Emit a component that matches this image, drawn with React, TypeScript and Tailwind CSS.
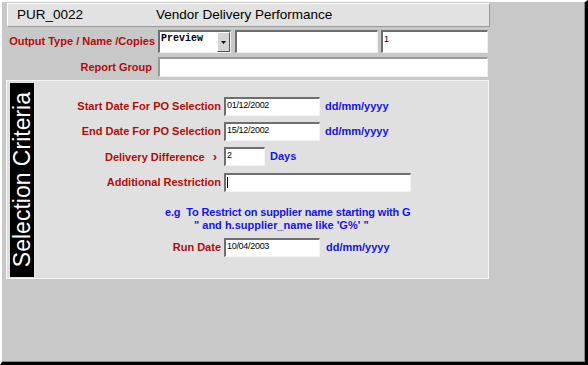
import React from "react";

const Label = ({ children, className = "" }: { children: React.ReactNode; className?: string }) => (
  <div className={"text-[11px] font-bold text-[#b00c0c] text-right leading-none whitespace-nowrap " + className}>{children}</div>
);

const PInput = ({ w, value = "" }: { w: string; value?: string }) => (
  <div
    className={
      "h-[19px] bg-white border-t-2 border-l-2 border-t-[#6e6e6e] border-l-[#6e6e6e] border-b border-r border-b-[#f4f4f4] border-r-[#f4f4f4] text-[9px] leading-none pl-[1px] pt-[2px] tracking-[-0.3px] text-black " +
      w
    }
  >
    {value}
  </div>
);

const Blue = ({ children, className = "" }: { children: React.ReactNode; className?: string }) => (
  <span className={"text-[11px] font-bold text-[#1414e6] leading-none whitespace-nowrap " + className}>{children}</span>
);

export default function App() {
  return (
    <div className="w-[588px] h-[365px] box-border bg-[#c8c8c8] border-t-2 border-l-2 border-t-white border-l-white border-r-[3px] border-b-[3px] border-r-black border-b-black font-['Liberation_Sans',Arial,sans-serif]">
      <div className="w-full h-full border-r border-b border-r-[#8a8a8a] border-b-[#8a8a8a] flex flex-col">
        {/* Title bar */}
        <div className="ml-[5px] mt-[1px] w-[483px] h-[24px] bg-[#e2e2e2] border-t border-l border-t-white border-l-white border-b border-r border-b-[#9a9a9a] border-r-[#9a9a9a] flex items-center text-[13.5px] text-black">
          <span className="ml-[9px] w-[139px]">PUR_0022</span>
          <span>Vendor Delivery Performance</span>
        </div>

        {/* Row 1 */}
        <div className="mt-[3px] h-[23px] flex items-center">
          <Label className="w-[153px]">Output Type / Name /Copies</Label>
          <div className="ml-[3px] w-[73px] h-[23px] flex border-t-2 border-l-2 border-t-[#6e6e6e] border-l-[#6e6e6e] border-b border-r border-b-[#f0f0f0] border-r-[#f0f0f0] bg-white">
            <div className="flex-1 font-['Liberation_Mono','Courier_New',monospace] font-bold text-[10px] leading-none pt-[2px] pl-[1px] text-black">Preview</div>
            <div className="w-[13px] h-full bg-[#d4d4d4] border-t border-l border-t-white border-l-white border-b border-r border-b-[#555] border-r-[#555] flex items-center justify-center">
              <svg width="5" height="3" viewBox="0 0 5 3"><polygon points="0,0 5,0 2.5,3" fill="#000" /></svg>
            </div>
          </div>
          <div className="ml-[4px] w-[143px] h-[23px] bg-white border-t-2 border-l-2 border-t-[#6e6e6e] border-l-[#6e6e6e] border-b border-r border-b-[#f0f0f0] border-r-[#f0f0f0]" />
          <div className="ml-[3px] w-[107px] h-[23px] bg-white border-t-2 border-l-2 border-t-[#6e6e6e] border-l-[#6e6e6e] border-b border-r border-b-[#f0f0f0] border-r-[#f0f0f0] text-[9px] leading-none pt-[3px] pl-[1px] text-black">1</div>
        </div>

        {/* Row 2 */}
        <div className="mt-[4px] h-[20px] flex items-center">
          <Label className="w-[150px]">Report Group</Label>
          <div className="ml-[6px] w-[330px] h-[20px] bg-white border-t-2 border-l-2 border-t-[#9a9a9a] border-l-[#9a9a9a] border-b border-r border-b-[#f0f0f0] border-r-[#f0f0f0]" />
        </div>

        {/* Panel */}
        <div className="mt-[3px] ml-[4px] w-[483px] h-[199px] bg-[#e0e0e0] border border-[#f6f6f6] pt-[2px] pl-[3px] pb-[1px] flex">
          <div className="w-[25px] h-full bg-black border-r border-r-[#e8e8e8] flex items-center justify-center">
            <span className="[writing-mode:vertical-rl] rotate-180 text-white text-[23px] leading-none whitespace-nowrap">Selection Criteria</span>
          </div>
          <div className="flex-1 flex flex-col">
            <div className="mt-[14px] flex items-center h-[19px]">
              <Label className="w-[186px]">Start Date For PO Selection</Label>
              <div className="ml-[3px]"><PInput w="w-[96px]" value="01/12/2002" /></div>
              <Blue className="ml-[5px]">dd/mm/yyyy</Blue>
            </div>
            <div className="mt-[6px] flex items-center h-[19px]">
              <Label className="w-[186px]">End Date For PO Selection</Label>
              <div className="ml-[3px]"><PInput w="w-[96px]" value="15/12/2002" /></div>
              <Blue className="ml-[5px]">dd/mm/yyyy</Blue>
            </div>
            <div className="mt-[6px] flex items-center h-[19px]">
              <Label className="w-[182px]">
                Delivery Difference <span className="ml-[5px] text-[13px] font-black">›</span>
              </Label>
              <div className="ml-[7px]"><PInput w="w-[41px]" value="2" /></div>
              <Blue className="ml-[5px]">Days</Blue>
            </div>
            <div className="mt-[7px] flex items-center h-[19px]">
              <Label className="w-[186px]">Additional Restriction</Label>
              <div className="ml-[3px]">
                <div className="h-[19px] w-[187px] bg-white border-t-2 border-l-2 border-t-[#6e6e6e] border-l-[#6e6e6e] border-b border-r border-b-[#f4f4f4] border-r-[#f4f4f4] pl-[1px] pt-[2px]">
                  <div className="w-[1px] h-[11px] bg-black" />
                </div>
              </div>
            </div>
            <div className="mt-[15px] flex flex-col">
              <Blue className="ml-[130px] tracking-[-0.15px]">e.g&nbsp; To Restrict on supplier name starting with G</Blue>
              <Blue className="ml-[159px] mt-[2px]">{"\" and h.supplier_name like 'G%'  \""}</Blue>
            </div>
            <div className="mt-[7px] flex items-center h-[19px]">
              <Label className="w-[186px]">Run Date</Label>
              <div className="ml-[3px]"><PInput w="w-[96px]" value="10/04/2003" /></div>
              <Blue className="ml-[6px]">dd/mm/yyyy</Blue>
            </div>
          </div>
        </div>
      </div>
    </div>
  );
}
